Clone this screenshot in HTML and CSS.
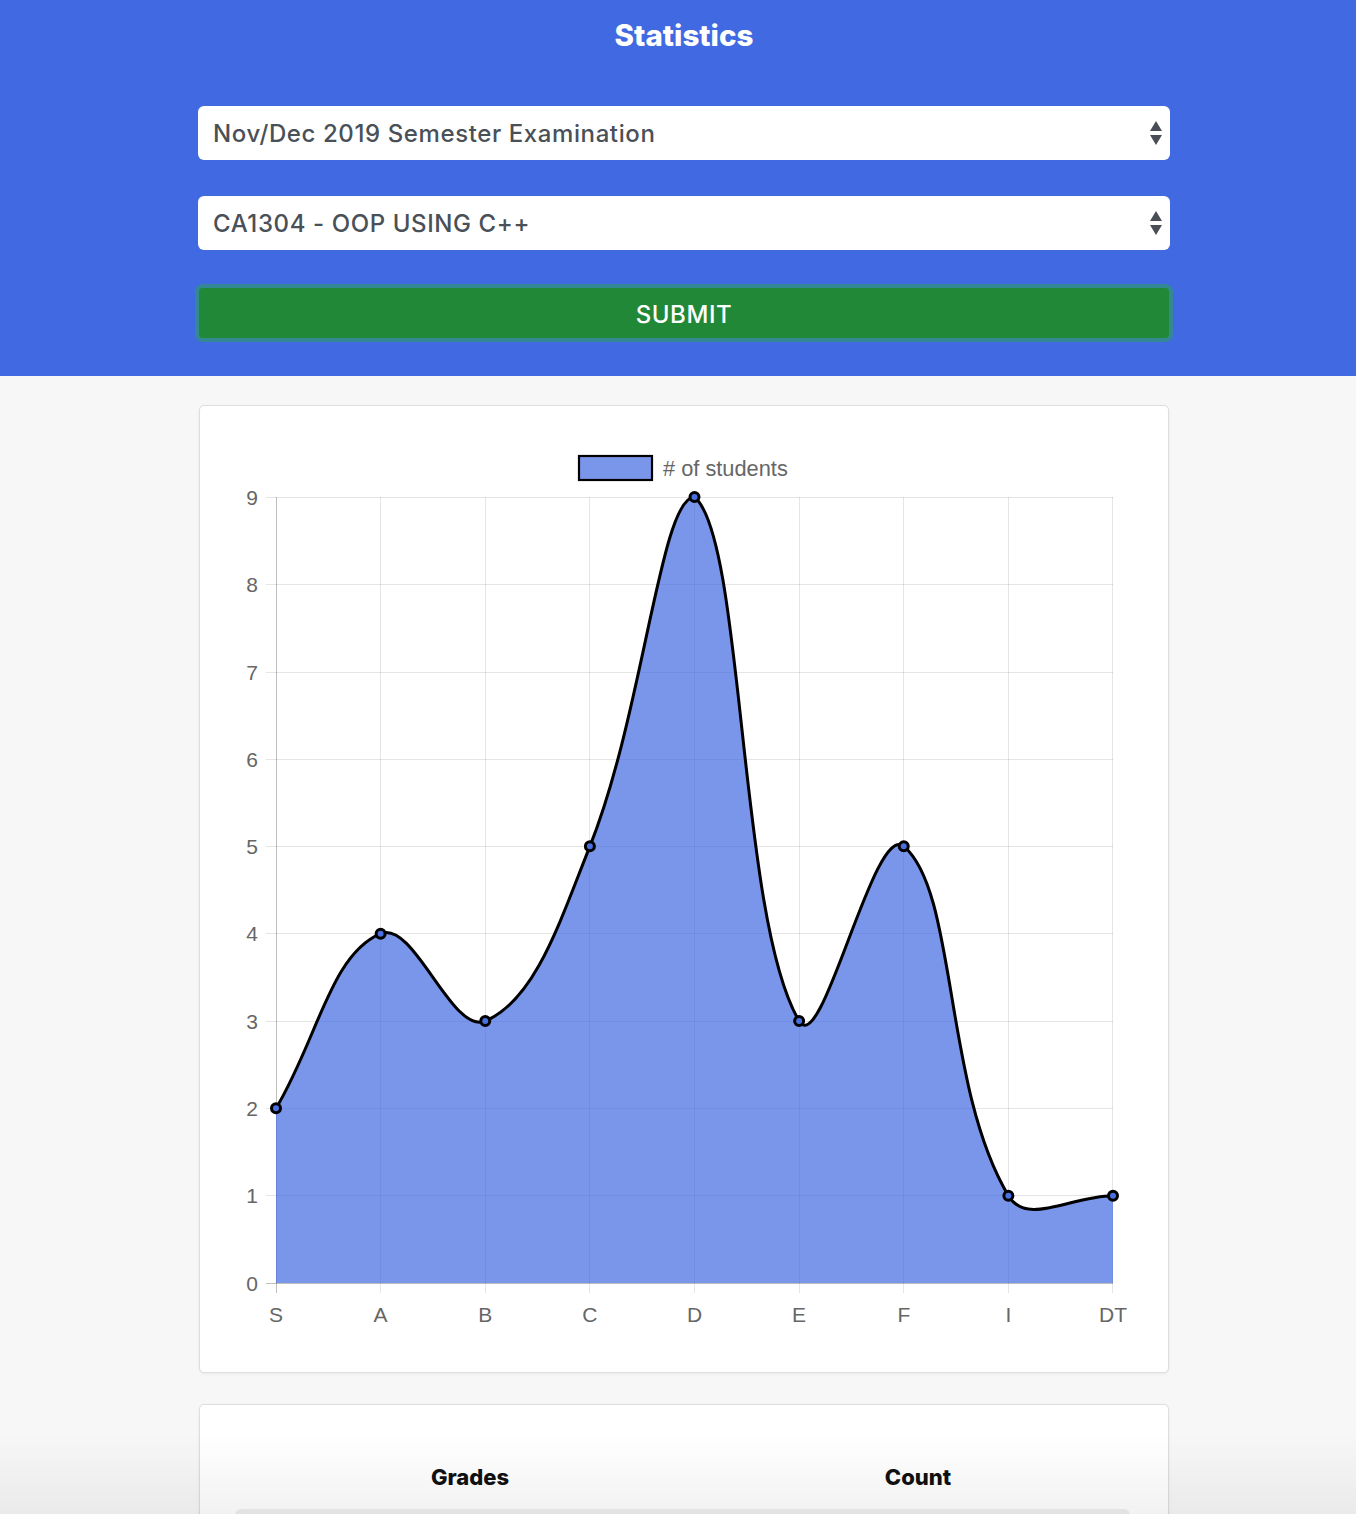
FILE: index.html
```html
<!DOCTYPE html>
<html lang="en">
<head>
<meta charset="utf-8">
<title>Statistics</title>
<link rel="stylesheet" href="styles.css">
</head>
<body>
<header class="hero">
  <div class="wrap">
    <h1 class="title">Statistics</h1>
    <form class="form">
      <div class="select">
        <span class="select-text">Nov/Dec 2019 Semester Examination</span>
        <svg class="select-arrows" width="12" height="24" viewBox="0 0 12 24"><path d="M6 0 L12 10 L0 10 Z M0 14 L12 14 L6 24 Z" fill="#4a4f57"/></svg>
      </div>
      <div class="select">
        <span class="select-text">CA1304 - OOP USING C++</span>
        <svg class="select-arrows" width="12" height="24" viewBox="0 0 12 24"><path d="M6 0 L12 10 L0 10 Z M0 14 L12 14 L6 24 Z" fill="#4a4f57"/></svg>
      </div>
      <button type="button" class="submit">SUBMIT</button>
    </form>
  </div>
</header>

<main class="content">
  <div class="wrap">
    <section class="card chart-card">
      <svg class="chart" width="968" height="966" viewBox="200 406 968 966">
        <g class="legend">
          <rect x="579" y="456" width="73" height="24" fill="rgba(65,105,225,0.7)" stroke="#000" stroke-width="2.2"/>
          <text x="663" y="476" class="lbl legend-text">#&#160;of students</text>
        </g>
        <g class="grid" stroke="rgba(0,0,0,0.1)" stroke-width="1">
          <line x1="266" y1="497.5" x2="1113" y2="497.5"/>
          <line x1="266" y1="584.5" x2="1113" y2="584.5"/>
          <line x1="266" y1="672.5" x2="1113" y2="672.5"/>
          <line x1="266" y1="759.5" x2="1113" y2="759.5"/>
          <line x1="266" y1="846.5" x2="1113" y2="846.5"/>
          <line x1="266" y1="933.5" x2="1113" y2="933.5"/>
          <line x1="266" y1="1021.5" x2="1113" y2="1021.5"/>
          <line x1="266" y1="1108.5" x2="1113" y2="1108.5"/>
          <line x1="266" y1="1195.5" x2="1113" y2="1195.5"/>
          <line x1="380.5" y1="497" x2="380.5" y2="1293"/>
          <line x1="485.5" y1="497" x2="485.5" y2="1293"/>
          <line x1="589.5" y1="497" x2="589.5" y2="1293"/>
          <line x1="694.5" y1="497" x2="694.5" y2="1293"/>
          <line x1="799.5" y1="497" x2="799.5" y2="1293"/>
          <line x1="903.5" y1="497" x2="903.5" y2="1293"/>
          <line x1="1008.5" y1="497" x2="1008.5" y2="1293"/>
          <line x1="1112.5" y1="497" x2="1112.5" y2="1293"/>
        </g>
        <g stroke="rgba(0,0,0,0.25)" stroke-width="1">
          <line x1="266" y1="1283.5" x2="1113" y2="1283.5"/>
          <line x1="276.5" y1="497" x2="276.5" y2="1293"/>
        </g>
        <g class="ylabels">
          <text x="258" y="505" class="lbl" text-anchor="end">9</text>
          <text x="258" y="592" class="lbl" text-anchor="end">8</text>
          <text x="258" y="680" class="lbl" text-anchor="end">7</text>
          <text x="258" y="767" class="lbl" text-anchor="end">6</text>
          <text x="258" y="854" class="lbl" text-anchor="end">5</text>
          <text x="258" y="941" class="lbl" text-anchor="end">4</text>
          <text x="258" y="1029" class="lbl" text-anchor="end">3</text>
          <text x="258" y="1116" class="lbl" text-anchor="end">2</text>
          <text x="258" y="1203" class="lbl" text-anchor="end">1</text>
          <text x="258" y="1291" class="lbl" text-anchor="end">0</text>
        </g>
        <g class="xlabels">
          <text x="276" y="1322" class="lbl" text-anchor="middle">S</text>
          <text x="380.6" y="1322" class="lbl" text-anchor="middle">A</text>
          <text x="485.3" y="1322" class="lbl" text-anchor="middle">B</text>
          <text x="589.9" y="1322" class="lbl" text-anchor="middle">C</text>
          <text x="694.5" y="1322" class="lbl" text-anchor="middle">D</text>
          <text x="799.1" y="1322" class="lbl" text-anchor="middle">E</text>
          <text x="903.8" y="1322" class="lbl" text-anchor="middle">F</text>
          <text x="1008.4" y="1322" class="lbl" text-anchor="middle">I</text>
          <text x="1113" y="1322" class="lbl" text-anchor="middle">DT</text>
        </g>
        <path fill="rgba(65,105,225,0.7)" d="M276,1108.33 C317.85,1038.46 330.49,954.59 380.625,933.67 C414.19,919.66 451.69,1035.01 485.25,1021 C535.39,1000.07 559.89,921.42 589.875,846.33 C643.59,711.82 660.54,497 694.5,497 C744.24,538.52 738.53,919.83 799.125,1021 C822.23,1059.57 873.76,821.3 903.75,846.33 C957.46,891.17 943.34,1087.1 1008.375,1195.67 C1027.04,1226.83 1071.15,1195.67 1113,1195.67 L1113,1283 L276,1283 Z"/>
        <path fill="none" stroke="#000" stroke-width="3" d="M276,1108.33 C317.85,1038.46 330.49,954.59 380.625,933.67 C414.19,919.66 451.69,1035.01 485.25,1021 C535.39,1000.07 559.89,921.42 589.875,846.33 C643.59,711.82 660.54,497 694.5,497 C744.24,538.52 738.53,919.83 799.125,1021 C822.23,1059.57 873.76,821.3 903.75,846.33 C957.46,891.17 943.34,1087.1 1008.375,1195.67 C1027.04,1226.83 1071.15,1195.67 1113,1195.67"/>
        <g fill="#4a6fe0" stroke="#000" stroke-width="3">
          <circle cx="276" cy="1108.33" r="4.5"/>
          <circle cx="380.625" cy="933.67" r="4.5"/>
          <circle cx="485.25" cy="1021" r="4.5"/>
          <circle cx="589.875" cy="846.33" r="4.5"/>
          <circle cx="694.5" cy="497" r="4.5"/>
          <circle cx="799.125" cy="1021" r="4.5"/>
          <circle cx="903.75" cy="846.33" r="4.5"/>
          <circle cx="1008.375" cy="1195.67" r="4.5"/>
          <circle cx="1113" cy="1195.67" r="4.5"/>
        </g>
      </svg>
    </section>

    <section class="card table-card">
      <div class="thead">
        <div class="th">Grades</div>
        <div class="th">Count</div>
      </div>
      <div class="rows">
        <div class="row striped"><span>S</span><span>2</span></div>
        <div class="row"><span>A</span><span>4</span></div>
        <div class="row striped"><span>B</span><span>3</span></div>
        <div class="row"><span>C</span><span>5</span></div>
        <div class="row striped"><span>D</span><span>9</span></div>
      </div>
    </section>
  </div>
</main>
<div class="bottom-fade"></div>
</body>
</html>
```

FILE: styles.css
```css
* { box-sizing: border-box; }

html, body {
  margin: 0;
  padding: 0;
}

body {
  background: #f7f7f7;
  font-family: "Inter", "Noto Sans", sans-serif;
  color: #212529;
}

.wrap {
  width: 972px;
  margin: 0 auto;
  position: relative;
  left: 6px;
}

.hero {
  background: #4169e1;
  padding: 17px 0 38px;
}

.title {
  margin: 0;
  text-align: center;
  color: #fff;
  font-size: 29.5px;
  line-height: 36px;
  font-weight: 800;
  letter-spacing: 0;
}

.form {
  margin-top: 53px;
  display: flex;
  flex-direction: column;
  gap: 36px;
}

.select {
  height: 54px;
  background: #fff;
  border-radius: 6px;
  display: flex;
  align-items: center;
  justify-content: space-between;
  padding: 0 8px 0 15px;
}

.select-text {
  font-size: 24px;
  font-weight: 500;
  color: #495057;
  letter-spacing: 0.6px;
}

.select-arrows {
  display: block;
}

.submit {
  margin: 2px 1px 0;
  height: 50px;
  padding-top: 3px;
  border: none;
  border-radius: 4px;
  background: #218838;
  color: #fff;
  font-family: "Inter", "Noto Sans", sans-serif;
  font-size: 24px;
  font-weight: 500;
  box-shadow: 0 0 0 4px rgba(40, 167, 69, 0.5);
  letter-spacing: 0.6px;
}

.content {
  padding-top: 29px;
  padding-bottom: 40px;
}

.card {
  width: 970px;
  margin: 0 auto;
  background: #fff;
  border: 1px solid #dedede;
  border-radius: 5px;
  box-shadow: 0 1px 3px rgba(0, 0, 0, 0.06);
}

.chart-card {
  height: 968px;
}

.chart {
  display: block;
}

.lbl {
  font-family: "Liberation Sans", Arial, sans-serif;
  font-size: 21px;
  fill: #666;
}

.legend-text {
  font-size: 21.8px;
}

.table-card {
  margin-top: 31px;
  padding: 48px 38px 30px 35px;
}

.thead {
  display: grid;
  grid-template-columns: 448px 448px;
  margin-left: 11px;
  height: 48px;
  align-items: center;
}

.th {
  text-align: center;
  font-weight: 800;
  font-size: 22px;
  color: #111;
}

.rows {
  margin-top: 8px;
}

.row {
  display: grid;
  grid-template-columns: 1fr 1fr;
  height: 52px;
  align-items: center;
  border-radius: 6px;
  font-size: 20px;
  color: #333;
}

.row span {
  text-align: center;
}

.row.striped {
  background: #efefef;
}

.bottom-fade {
  position: fixed;
  left: 0;
  right: 0;
  bottom: 0;
  height: 80px;
  background: linear-gradient(to bottom, rgba(0, 0, 0, 0), rgba(0, 0, 0, 0.05));
  pointer-events: none;
}
```
